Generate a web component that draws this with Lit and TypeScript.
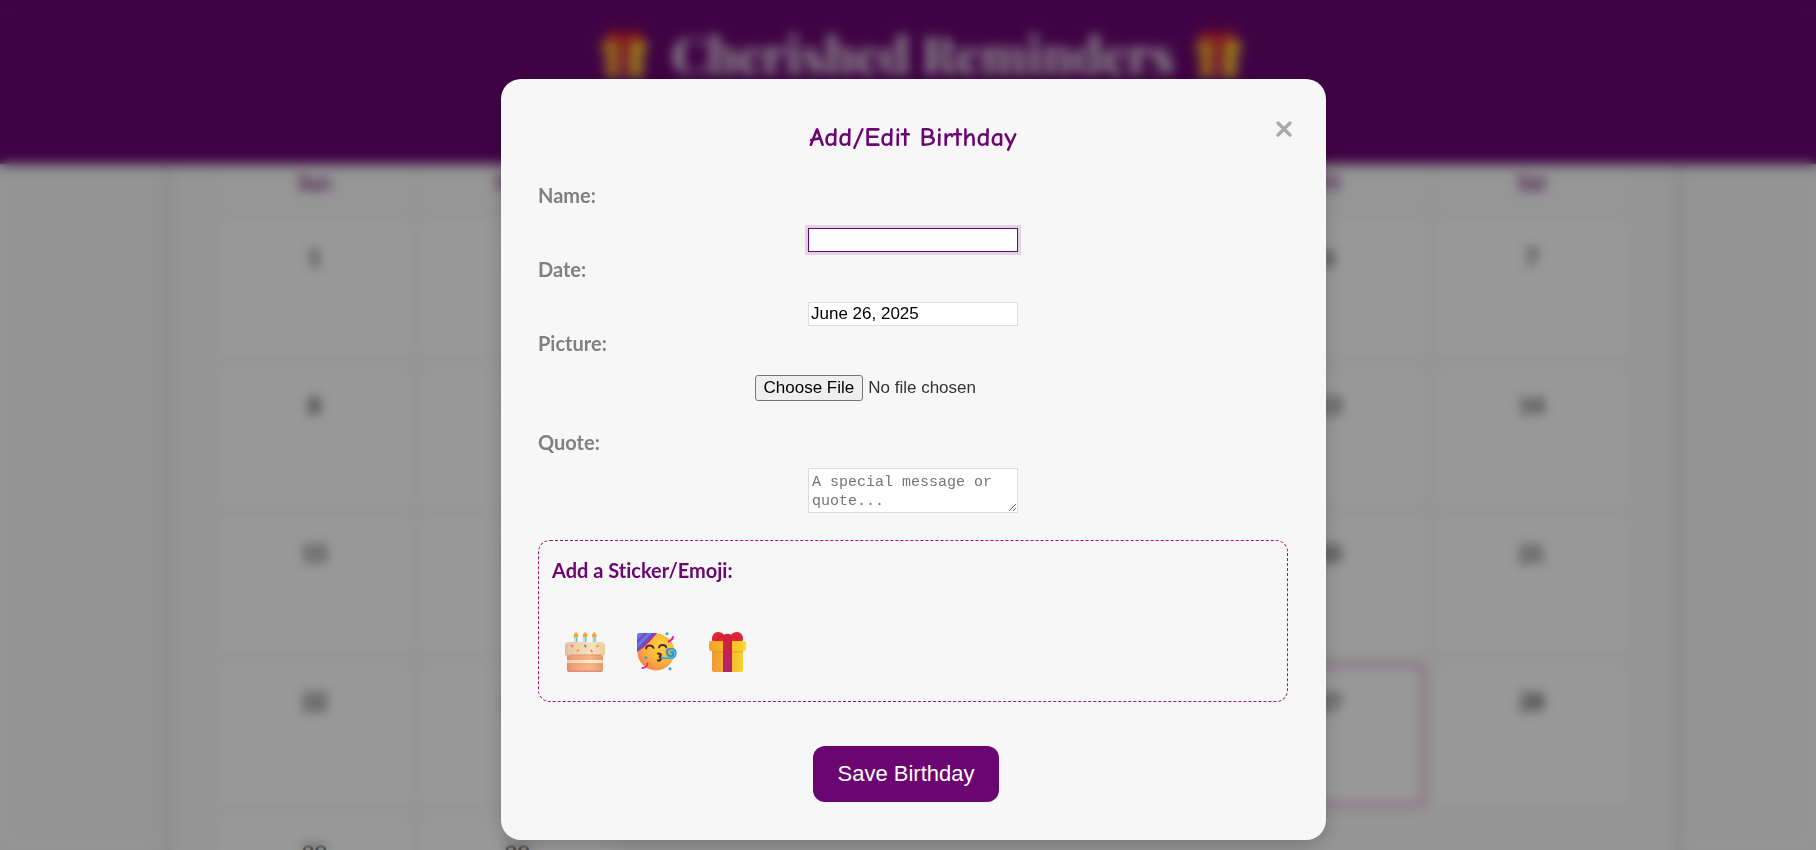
import { LitElement, html, css, svg } from "lit";
import { customElement, state, query } from "lit/decorators.js";
import { classMap } from "lit/directives/class-map.js";

const WEEKDAYS = ["Sun", "Mon", "Tue", "Wed", "Thu", "Fri", "Sat"];
const DAYS = Array.from({ length: 30 }, (_, i) => i + 1);
const TODAY = 27;

const gift = svg`
  <defs>
    <linearGradient id="box"><stop offset="0" stop-color="#ee9a35"/><stop offset=".6" stop-color="#f6b92c"/><stop offset="1" stop-color="#f7d432"/></linearGradient>
    <linearGradient id="lid"><stop offset="0" stop-color="#f3a32b"/><stop offset=".6" stop-color="#f9bd1e"/><stop offset="1" stop-color="#fddc2c"/></linearGradient>
    <linearGradient id="ribbon" x2="0" y2="1"><stop offset="0" stop-color="#d8202f"/><stop offset="1" stop-color="#b0246f"/></linearGradient>
  </defs>
  <rect x="3" y="17" width="31" height="23" rx="2" fill="url(#box)"/>
  <path d="M3 19h31v1.500H3z" fill="#d98a22" opacity=".4"/>
  <path d="M3.500 9C1.500 5 5 0 9 0c4 0 7 3 8 6l1 4H4zM33.500 9c2-4-1.500-9-5.500-9-4 0-7 3-8 6l-1 4h14z" fill="#e0243a"/>
  <path d="M8 9c0-3 3-5 7-4M29 9c0-3-3-5-7-4" stroke="#b5182c" stroke-width=".6" fill="none"/>
  <rect x="0" y="9" width="37" height="10" rx="2" fill="url(#lid)"/>
  <path d="M14 40V5c0-4.500 9-4.500 9 0v35z" fill="url(#ribbon)"/>`;

const cake = svg`
  <defs>
    <linearGradient id="base"><stop offset="0" stop-color="#d98e66"/><stop offset=".15" stop-color="#eda277"/><stop offset=".65" stop-color="#fcb582"/><stop offset="1" stop-color="#e39a70"/></linearGradient>
    <linearGradient id="icing"><stop offset="0" stop-color="#cbb298"/><stop offset=".15" stop-color="#e7c9a9"/><stop offset=".7" stop-color="#fae3b8"/><stop offset="1" stop-color="#e8cca2"/></linearGradient>
    <linearGradient id="cream"><stop offset="0" stop-color="#f4c9b0"/><stop offset=".7" stop-color="#fff0cf"/><stop offset="1" stop-color="#f7d8b0"/></linearGradient>
  </defs>
  <path d="M2 20h36v17.500q0 2.500-2.500 2.500h-31Q2 40 2 37.500z" fill="url(#base)"/>
  <path d="M2 28h36v3H2z" fill="url(#cream)"/>
  <path d="M3 39.200h34" stroke="#d97f88"/>
  <path d="M0 14q0-4 4-4h32q4 0 4 4v7q0 2.500-2 2.500t-3-1.500q-2 2-4 0-2 2-4 0-2 3-4 .5-2 2-4 0-2 2-4 0-2 2-4 0-2 2-4 0-2 2.500-4 .5-1 1-3 .5-3 0-3-3z" fill="url(#icing)"/>
  <path d="M4 23q2 1.500 4-.5 2 2 4 0 2 2 4 0 2 2 4 0 2 2 4 0 2 2 4 0 2 2 4 0 2 2 4 0" fill="none" stroke="#c97f68" stroke-width=".6"/>
  <g stroke-linecap="round" stroke-width="1.700">
    <path d="M6.500 13.500l1 1M26 18.500l1 1" stroke="#db6bb0"/>
    <path d="M20 13.500l.6 1" stroke="#3d86d8"/>
    <path d="M13.500 18l-1 1M33 13.500l-1 1" stroke="#ec8a38"/>
  </g>
  <g stroke="#54cdea" stroke-width="3"><path d="M11 5.500V10M20 5.500V10M29.300 5.500V10"/></g>
  <g stroke="#b8f0fa"><path d="M10.500 6v4M19.500 6v4M28.800 6v4"/></g>
  <g fill="#fba22b"><path d="M11 0q4 4 1.500 5.500h-3Q7 4 11 0zM20 0q4 4 1.500 5.500h-3Q16 4 20 0zM29.300 0q4 4 1.500 5.500h-3q-2.500-1.500 1.500-5.500z"/></g>`;

const party = svg`
  <defs>
    <radialGradient id="skin" cx=".65" cy=".35" r=".75"><stop offset="0" stop-color="#ffd23c"/><stop offset=".6" stop-color="#fbb03a"/><stop offset="1" stop-color="#ef7f4d"/></radialGradient>
    <clipPath id="hat"><path d="M0 3q0-2 2-2h18L14 8 7 15 0 20z"/></clipPath>
  </defs>
  <circle cx="19" cy="20" r="18.500" fill="url(#skin)"/>
  <g clip-path="url(#hat)">
    <rect width="22" height="22" fill="#4f85f0"/>
    <path d="M-2 12L12-2M-2 20L20-2" stroke="#8a3fb4" stroke-width="2.600"/>
    <path d="M1 21L21 1" stroke="#b0288f" stroke-width="3"/>
  </g>
  <path d="M9 16.500q.5-3 3.700-3t3.800 2.500M22 15.500q.5-2.500 3.700-2.500t3.500 2.500" fill="none" stroke="#4b2a3a" stroke-width="1.800" stroke-linecap="round"/>
  <path d="M21 21.500q3 0 2.600 1.700-.3 1.500-1.600 1.500 2 .3 1.800 2.200-.3 1.900-2.800 1.600" fill="none" stroke="#4b2330" stroke-width="2.200" stroke-linecap="round"/>
  <path d="M24.500 26H35q3.500-1 3.500-5t-4.500-4-4 3.500 3.500 3.500 2.500-2.500-2-1.200" fill="none" stroke="#2798cf" stroke-width="2.200" stroke-linecap="round"/>
  <path d="M25 25.700H35q3-1 3-4.500t-4-4" fill="none" stroke="#65c9ee" stroke-width=".8"/>
  <path d="M36 5q-.5 3-4.500 4.500M10.500 31.500q-.5 4-5 4.500" fill="none" stroke="#f01f92" stroke-width="1.900" stroke-linecap="round"/>
  <g fill="#3f9cf2"><circle cx="30" cy="1.700" r="1.500"/><circle cx="9" cy="25.700" r="1.500"/><circle cx="33" cy="36.700" r="1.500"/></g>`;

const STICKERS = [
  { name: "Cake", art: cake },
  { name: "Party face", art: party },
  { name: "Gift", art: gift },
];

@customElement("birthday-calendar")
export class BirthdayCalendar extends LitElement {
  static styles = css`
    :host {
      display: block;
      margin: -44px 172px 0;
      padding: 34px 46px 60px;
      background: #f8f8f8;
      box-shadow: 0 0 20px rgba(0, 0, 0, 0.12);
      font-family: Lato, sans-serif;
    }
    .grid {
      display: grid;
      grid-template-columns: repeat(7, 1fr);
      gap: 10px;
      text-align: center;
      font-weight: 700;
    }
    .weekday {
      padding: 14px 0;
      font-size: 20px;
      line-height: 28px;
      color: #6a0572;
      background: #fbfbfb;
    }
    .day {
      min-height: 114px;
      padding-top: 24px;
      border-radius: 8px;
      background: #fff;
      color: #333;
      font-size: 22px;
      line-height: 28px;
    }
    .today {
      border: 3px solid #d28bb4;
      padding-top: 22px;
    }
  `;

  render() {
    return html`<div class="grid">
      ${WEEKDAYS.map((d) => html`<div class="weekday">${d}</div>`)}
      ${DAYS.map(
        (d) => html`<div class=${classMap({ day: true, today: d === TODAY })}>${d}</div>`
      )}
    </div>`;
  }
}

@customElement("birthday-form")
export class BirthdayForm extends LitElement {
  static styles = css`
    :host {
      display: block;
      box-sizing: border-box;
      width: 825px;
      max-width: 100%;
      padding: 37px 38px 38px 37px;
      border-radius: 20px;
      background: #f7f7f7;
      box-shadow: 0 5px 20px rgba(0, 0, 0, 0.2);
      position: relative;
      font-family: Lato, sans-serif;
      font-variant-ligatures: none;
    }
    .title {
      margin: 0 0 20px;
      text-align: center;
      font: 700 27px/44px "Comic Neue", "Comic Sans MS", "Comic Relief", cursive;
      color: #6a0572;
    }
    .close {
      position: absolute;
      top: 38px;
      right: 30px;
      width: 24px;
      height: 24px;
      padding: 4px;
      border: 0;
      background: none;
      color: #aaa;
    }
    .close svg {
      display: block;
    }
    .form {
      display: flex;
      flex-direction: column;
      align-items: center;
    }
    .label {
      align-self: flex-start;
      font-size: 20px;
      font-weight: 700;
      line-height: 30px;
      color: #808080;
    }
    .field,
    .quote {
      box-sizing: border-box;
      width: 210px;
      padding: 2px;
      border: 1px solid #ddd;
      border-radius: 0;
      background: #fff;
      color: #000;
    }
    .field {
      height: 24px;
      margin: 18px 0 2px;
      font: 17px "Liberation Sans", Arial, sans-serif;
    }
    .field:focus {
      outline: none;
      border-color: #6a0572;
      box-shadow: 0 0 0 3px rgba(106, 5, 114, 0.15);
    }
    .file {
      width: 317px;
      height: 26px;
      margin: 17px 0 26px;
      font: 17px/20px "Liberation Sans", Arial, sans-serif;
      color: #333;
    }
    .file::file-selector-button {
      height: 26px;
      padding: 1px 8px;
      margin-right: 5px;
      border: 1px solid #767676;
      border-radius: 3px;
      background: #efefef;
      color: #000;
      font: inherit;
    }
    .quote {
      height: 45px;
      margin: 11px 0 27px;
      padding: 4px 3px 0;
      font: 15px/19px "Liberation Mono", monospace;
    }
    .quote::placeholder {
      color: #757575;
    }
    .stickers {
      align-self: stretch;
      padding: 14px 13px 16px;
      border: 1px dashed #a4156c;
      border-radius: 12px;
    }
    .subtitle {
      margin: 0 0 34px;
      font-size: 20px;
      line-height: 30px;
      color: #6a0572;
    }
    .choices {
      display: flex;
      gap: 6px;
    }
    .sticker {
      padding: 13px;
      border: 0;
      background: none;
    }
    .sticker svg {
      display: block;
    }
    .save {
      margin: 44px 14px 0 0;
      padding: 14px 25px;
      border: 0;
      border-radius: 12px;
      background: #6a0572;
      color: #fff;
      font: 22px/28px "Liberation Sans", Arial, sans-serif;
    }
  `;

  @state() private date = "June 26, 2025";
  @query("#name") private nameInput!: HTMLInputElement;

  firstUpdated() {
    this.nameInput.focus();
  }

  render() {
    return html`
      <button class="close" type="button" aria-label="Close">
        <svg width="16" height="16" viewBox="0 0 16 16" fill="none" stroke="currentColor" stroke-width="3.400" stroke-linecap="round">
          <path d="M2 2l12 12M14 2L2 14" />
        </svg>
      </button>
      <h2 class="title">Add/Edit Birthday</h2>
      <form class="form" @submit=${(e: Event) => e.preventDefault()}>
        <label class="label" for="name">Name:</label>
        <input class="field" id="name" type="text" autocomplete="off" />
        <label class="label" for="date">Date:</label>
        <input class="field" id="date" type="text" .value=${this.date} />
        <label class="label" for="picture">Picture:</label>
        <input class="file" id="picture" type="file" accept="image/*" />
        <label class="label" for="quote">Quote:</label>
        <textarea class="quote" id="quote" placeholder="A special message or quote..."></textarea>
        <section class="stickers">
          <h3 class="subtitle">Add a Sticker/Emoji:</h3>
          <div class="choices">
            ${STICKERS.map(
              (s) => html`<button class="sticker" type="button" aria-label=${s.name}>
                <svg width="40" height="40" viewBox="0 0 40 40">${s.art}</svg>
              </button>`
            )}
          </div>
        </section>
        <button class="save" type="submit">Save Birthday</button>
      </form>
    `;
  }
}

@customElement("app-root")
export class AppRoot extends LitElement {
  static styles = css`
    :host {
      display: block;
      height: 100vh;
      overflow: hidden;
      background: #f7f7f7;
    }
    .page {
      margin-right: -30px;
    }
    .header {
      position: relative;
      z-index: 1;
      box-sizing: border-box;
      height: 164px;
      padding-top: 18px;
      background: #6a0572;
      box-shadow: 0 4px 10px rgba(0, 0, 0, 0.1);
    }
    .brand {
      display: flex;
      justify-content: center;
      align-items: center;
      gap: 22px;
      margin: 0;
      font: 700 50px/72px "Playfair Display", "Liberation Serif", serif;
      color: #f7f7f7;
    }
    .overlay {
      position: fixed;
      inset: 0;
      z-index: 2;
      display: flex;
      justify-content: center;
      align-items: flex-start;
      padding: 79px 0 0 11px;
      background: rgba(0, 0, 0, 0.4);
      backdrop-filter: blur(6px);
    }
  `;

  render() {
    const mark = html`<svg width="48" height="48" viewBox="0 0 40 40">${gift}</svg>`;
    return html`
      <div class="page">
        <header class="header">
          <h1 class="brand">${mark}<span>Cherished Reminders</span>${mark}</h1>
        </header>
        <birthday-calendar></birthday-calendar>
      </div>
      <div class="overlay" role="dialog" aria-modal="true">
        <birthday-form></birthday-form>
      </div>
    `;
  }
}
